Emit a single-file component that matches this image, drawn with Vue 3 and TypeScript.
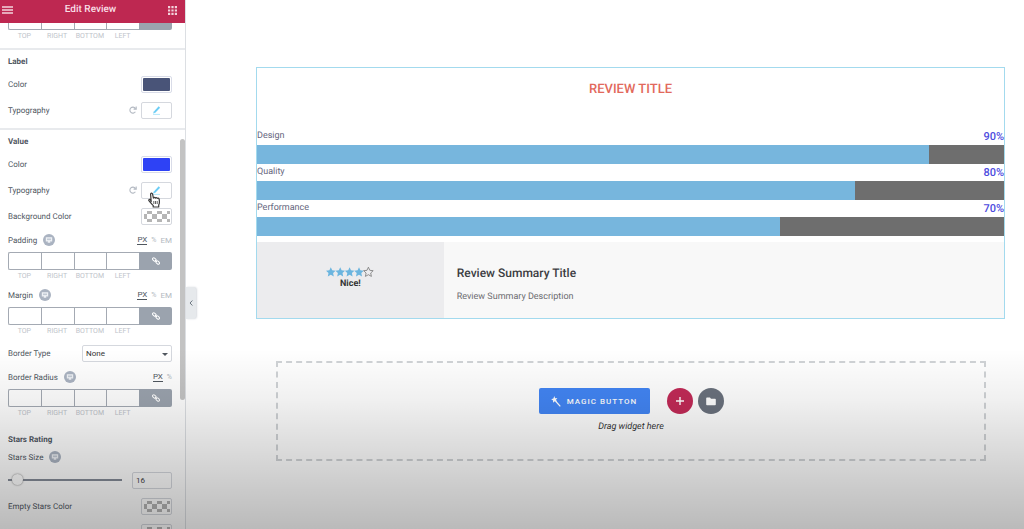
<script setup lang="ts">
import { ref } from 'vue'

interface Criterion {
  name: string
  value: number
}

const criteria: Criterion[] = [
  { name: 'Design', value: 90 },
  { name: 'Quality', value: 80 },
  { name: 'Performance', value: 70 },
]
const sides = ['Top', 'Right', 'Bottom', 'Left']
const spacingUnits = ['PX', '%', 'EM']
const spacing = ['Padding', 'Margin']
const starsSize = ref(16)
const labelColor = ref('#495478')
const valueColor = ref('#2e42f5')
</script>

<template>
  <div class="editor">
    <aside class="panel">
      <header class="panel-head">
        <button class="icon-btn" aria-label="Menu">
          <svg width="11" height="8" viewBox="0 0 11 8"><path d="M0 1h11M0 4h11M0 7h11" stroke="#f3d3dc" stroke-width="1.5" /></svg>
        </button>
        <h1>Edit Review</h1>
        <button class="icon-btn" aria-label="Widgets">
          <svg width="9" height="9" viewBox="0 0 9 9" fill="#f3d3dc">
            <path d="M0 0h2.200v2.200H0zM3.400 0h2.200v2.200H3.400zM6.800 0H9v2.200H6.800zM0 3.400h2.200v2.200H0zM3.400 3.400h2.200v2.200H3.400zM6.800 3.400H9v2.200H6.800zM0 6.800h2.200V9H0zM3.400 6.800h2.200V9H3.400zM6.800 6.800H9V9H6.800z" />
          </svg>
        </button>
      </header>

      <div class="scroll">
        <div class="controls">
          <section class="group first">
            <div class="dims">
              <label v-for="s in sides" :key="s"><input type="text" /><span>{{ s }}</span></label>
              <button class="link" aria-label="Link values"></button>
            </div>
          </section>

          <section class="group">
            <h2>Label</h2>
            <div class="row">
              <label for="label-color">Color</label>
              <input id="label-color" v-model="labelColor" class="swatch" type="color" />
            </div>
            <div class="row">
              <span>Typography</span>
              <button class="reset" aria-label="Reset label typography">
                <svg width="8" height="8" viewBox="0 0 8 8"><path d="M6.400 5.800A3 3 0 1 1 6.300 2.300M7.200.6v2.500H4.600" fill="none" stroke="#b3b9c2" stroke-width="1.100" /></svg>
              </button>
              <button class="box-btn" aria-label="Edit label typography">
                <svg width="9" height="9" viewBox="0 0 9 9"><path d="M2.600 6.200 7.400 1" stroke="#6bcdf5" stroke-width="1.900" /><path d="m1.200 7.400.6-2.200 1.600 1.500z" fill="#6bcdf5" /><path d="M1 8.400h7" stroke="#b5e8fa" stroke-width="1" /></svg>
              </button>
            </div>
          </section>

          <section class="group">
            <h2>Value</h2>
            <div class="row">
              <label for="value-color">Color</label>
              <input id="value-color" v-model="valueColor" class="swatch" type="color" />
            </div>
            <div class="row">
              <span>Typography</span>
              <button class="reset" aria-label="Reset value typography">
                <svg width="8" height="8" viewBox="0 0 8 8"><path d="M6.400 5.800A3 3 0 1 1 6.300 2.300M7.200.6v2.500H4.600" fill="none" stroke="#b3b9c2" stroke-width="1.100" /></svg>
              </button>
              <button class="box-btn" aria-label="Edit value typography">
                <svg width="9" height="9" viewBox="0 0 9 9"><path d="M2.600 6.200 7.400 1" stroke="#6bcdf5" stroke-width="1.900" /><path d="m1.200 7.400.6-2.200 1.600 1.500z" fill="#6bcdf5" /><path d="M1 8.400h7" stroke="#b5e8fa" stroke-width="1" /></svg>
                <svg class="cursor" width="13" height="16" viewBox="0 0 13 16">
                  <path d="M3.200 9.600 2.600 2.400C2.500.8 4.300.6 4.600 2.200l.8 3.900c.3-1 1.700-1 1.900.1.4-.8 1.700-.7 1.900.3.5-.7 1.800-.5 1.900.7.5 2.300.6 4.100-.4 5.800v2H5.200v-1.500C3.900 12.100 2.300 10.500.9 8.700c-.5-1 .8-1.700 1.500-.9z" fill="#fff" stroke="#3a3a3a" stroke-width="1.200" stroke-linejoin="round" />
                  <path d="M5.800 9v3M7.500 9v3M9.200 9v3" stroke="#3a3a3a" stroke-width=".8" />
                </svg>
              </button>
            </div>
            <div class="row">
              <span>Background Color</span>
              <button class="box-btn" aria-label="Background color"><i class="checker"></i></button>
            </div>

            <div class="spacing">
              <div v-for="name in spacing" :key="name" class="field">
                <div class="caption">
                  <span>{{ name }}</span>
                  <button class="device" aria-label="Desktop">
                    <svg width="12" height="12" viewBox="0 0 12 12"><circle cx="6" cy="6" r="6" fill="#aab3c1" /><path d="M2.800 3.200h6.400v4.400H7l.4 1.200H4.600L5 7.600H2.800z" fill="#eef1f5" /><path d="M4 4.500h4v1.600H4z" fill="#c3cad4" /></svg>
                  </button>
                  <span class="units"><button v-for="(u, i) in spacingUnits" :key="u" :class="{ on: i === 0, pct: u === '%' }">{{ u }}</button></span>
                </div>
                <div class="dims">
                  <label v-for="s in sides" :key="s"><input type="text" /><span>{{ s }}</span></label>
                  <button class="link" aria-label="Link values">
                    <svg width="8" height="8" viewBox="0 0 8 8" fill="none" stroke="#fff" stroke-width="1"><rect x=".3" y="1.300" width="4" height="2.400" rx="1.200" transform="rotate(45 2.300 2.500)" /><rect x="3.700" y="4.300" width="4" height="2.400" rx="1.200" transform="rotate(45 5.700 5.500)" /><path d="m3 3 2 2" /></svg>
                  </button>
                </div>
              </div>
            </div>

            <div class="row select-row">
              <label for="border-type">Border Type</label>
              <div class="select">
                <select id="border-type"><option>None</option></select>
              </div>
            </div>

            <div class="field">
              <div class="caption">
                <span>Border Radius</span>
                <button class="device" aria-label="Desktop">
                  <svg width="12" height="12" viewBox="0 0 12 12"><circle cx="6" cy="6" r="6" fill="#aab3c1" /><path d="M2.800 3.200h6.400v4.400H7l.4 1.200H4.600L5 7.600H2.800z" fill="#eef1f5" /><path d="M4 4.500h4v1.600H4z" fill="#c3cad4" /></svg>
                </button>
                <span class="units"><button class="on">PX</button><button class="pct">%</button></span>
              </div>
              <div class="dims">
                <label v-for="s in sides" :key="s"><input type="text" /><span>{{ s }}</span></label>
                <button class="link" aria-label="Link values">
                  <svg width="8" height="8" viewBox="0 0 8 8" fill="none" stroke="#fff" stroke-width="1"><rect x=".3" y="1.300" width="4" height="2.400" rx="1.200" transform="rotate(45 2.300 2.500)" /><rect x="3.700" y="4.300" width="4" height="2.400" rx="1.200" transform="rotate(45 5.700 5.500)" /><path d="m3 3 2 2" /></svg>
                </button>
              </div>
            </div>

            <h2 class="sub">Stars Rating</h2>
            <div class="caption">
              <label for="stars-size">Stars Size</label>
              <button class="device" aria-label="Desktop">
                <svg width="12" height="12" viewBox="0 0 12 12"><circle cx="6" cy="6" r="6" fill="#aab3c1" /><path d="M2.800 3.200h6.400v4.400H7l.4 1.200H4.600L5 7.600H2.800z" fill="#eef1f5" /><path d="M4 4.500h4v1.600H4z" fill="#c3cad4" /></svg>
              </button>
            </div>
            <div class="slider">
              <input id="stars-size" v-model.number="starsSize" type="range" min="12" max="120" />
              <input v-model.number="starsSize" class="num" type="text" aria-label="Stars size value" />
            </div>
            <div class="row">
              <span>Empty Stars Color</span>
              <button class="box-btn" aria-label="Empty stars color"><i class="checker"></i></button>
            </div>
            <div class="row">
              <span>Filled Stars Color</span>
              <button class="box-btn" aria-label="Filled stars color"><i class="checker"></i></button>
            </div>
          </section>
        </div>
      </div>
      <div class="thumb"></div>
      <button class="collapse" aria-label="Collapse panel">
        <svg width="4" height="6" viewBox="0 0 4 6"><path d="M3.400.5 1 3l2.400 2.500" fill="none" stroke="#6d7882" stroke-width="1" /></svg>
      </button>
    </aside>

    <main class="canvas">
      <article class="review">
        <h2 class="title">REVIEW TITLE</h2>
        <div v-for="c in criteria" :key="c.name" class="criterion">
          <div class="criterion-head">
            <span>{{ c.name }}</span>
            <strong>{{ c.value }}%</strong>
          </div>
          <div class="track"><div class="fill" :style="{ width: c.value + '%' }"></div></div>
        </div>
        <div class="summary">
          <div class="score">
            <svg width="48" height="10" viewBox="0 0 48 10" role="img" aria-label="4 of 5 stars">
              <path v-for="n in 5" :key="n" :transform="`translate(${(n - 1) * 9.4} 0)`" d="M4.800.2 6.200 3.300l3.400.4-2.500 2.300.7 3.400-3-1.700-3 1.700.7-3.400L0 3.700l3.400-.4z" :class="n < 5 ? 'star-on' : 'star-off'" />
            </svg>
            <b>Nice!</b>
          </div>
          <div class="summary-text">
            <h3>Review Summary Title</h3>
            <p>Review Summary Description</p>
          </div>
        </div>
      </article>

      <section class="drop">
        <div class="actions">
          <button class="magic">
            <svg width="10" height="11" viewBox="0 0 10 11"><path d="m4.500 5 4.800 5.400" stroke="#fff" stroke-width="1.200" /><path d="m3.300 0 .8 2.200L6.400 2 5 3.800l1 2-2.200-.6L2 6.700l.1-2.300L.2 3.200l2.200-.6z" fill="#fff" /></svg>
            MAGIC BUTTON
          </button>
          <button class="round add" aria-label="Add section">
            <svg width="8" height="8" viewBox="0 0 8 8"><path d="M4 0v8M0 4h8" stroke="#fff" stroke-width="1.400" /></svg>
          </button>
          <button class="round folder" aria-label="Add template">
            <svg width="10" height="9" viewBox="0 0 10 9"><path d="M1 .5h3l1 1.200h4a.8.8 0 0 1 .8.800v5a.8.8 0 0 1-.8.800H1a.8.8 0 0 1-.8-.8V1.300A.8.8 0 0 1 1 .5z" fill="#fff" /></svg>
          </button>
        </div>
        <p>Drag widget here</p>
      </section>
    </main>
    <div class="shade"></div>
  </div>
</template>

<style>
body { margin: 0; }
</style>

<style scoped>
* { box-sizing: border-box; }
h1, h2, h3, p { margin: 0; }
button { padding: 0; border: 0; background: none; font: inherit; color: inherit; display: flex; align-items: center; justify-content: center; }
svg { display: block; flex: none; }
.editor {
  position: relative;
  display: flex;
  height: 100vh;
  overflow: hidden;
  background: #fff;
  font-family: Roboto, "Liberation Sans", sans-serif;
  text-rendering: geometricPrecision;
}
.panel {
  position: relative;
  display: flex;
  flex-direction: column;
  flex: none;
  width: 186px;
  border-right: 1px solid #dcdfe3;
  font-size: 8px;
  color: #50575f;
}
.panel-head {
  display: flex;
  flex: none;
  align-items: center;
  justify-content: space-between;
  height: 23px;
  padding: 0 8px 3px 2px;
  background: #be2851;
}
.panel-head h1 { font-size: 10px; font-weight: 500; line-height: 16px; color: #f9dfe6; }
.scroll { flex: 1; min-height: 0; overflow: hidden; }
.controls { margin-top: -13px; }
.group { padding: 6px 13px 5px 8px; border-top: 2px solid #e8eaed; }
.group.first { padding-top: 0; padding-bottom: 6px; border-top: 0; }
h2 { font-size: 8px; font-weight: 700; line-height: 12px; }
.row { display: flex; align-items: center; height: 26px; }
h2 + .row { margin-top: 3px; }
.row > :first-child { margin-right: auto; }
.swatch {
  width: 31px;
  height: 17px;
  padding: 1px;
  border: 1px solid #d9dce8;
  border-radius: 2px;
  background: #fff;
}
.swatch::-webkit-color-swatch-wrapper { padding: 0; }
.swatch::-webkit-color-swatch { border: 0; border-radius: 1px; }
.reset { margin-right: 4px; }
.box-btn {
  position: relative;
  width: 31px;
  height: 17px;
  border: 1px solid #d5d8de;
  border-radius: 2px;
  background: #fff;
}
.cursor { position: absolute; left: 6px; top: 9px; z-index: 2; }
.checker {
  width: 26px;
  height: 11px;
  background: repeating-conic-gradient(#b5b5b5 0 25%, #fff 0 50%) 3px 3px / 10px 10px;
}
.spacing { margin-top: 1px; }
.select-row { height: 27px; }
.field { height: 55px; }
.caption { display: flex; align-items: center; height: 20px; }
.device { margin-left: 6px; }
.units { display: flex; gap: 4px; margin-left: auto; color: #b3b9c1; }
.units button { line-height: 9px; }
.units .pct { font-size: 7px; }
.units .on { color: #50575f; border-bottom: 1px solid #50575f; }
.dims { display: flex; align-items: flex-start; margin-top: 2px; }
.dims label { flex: 1; text-align: center; font-size: 7px; line-height: 12px; color: #c0c4ca; text-transform: uppercase; }
.dims label span { display: block; }
.dims input {
  display: block;
  width: 100%;
  height: 18px;
  border: 1px solid #a4aab3;
  border-right-width: 0;
  background: #fff;
}
.dims label:first-child input { border-radius: 2px 0 0 2px; }
.link { width: 33px; height: 18px; background: #9ba3ae; border-radius: 0 2px 2px 0; }
.select { position: relative; width: 90px; }
.select::after {
  content: "";
  position: absolute;
  right: 4px;
  top: 8px;
  border: 3px solid transparent;
  border-top-color: #50575f;
  border-bottom: 0;
}
select {
  appearance: none;
  display: block;
  width: 100%;
  height: 17px;
  padding: 0 3px;
  border: 1px solid #d5d8de;
  border-radius: 2px;
  background: #fff;
  font: inherit;
  color: #333;
}
.sub { margin: 12px 0 1px; }
.slider { display: flex; align-items: center; gap: 10px; height: 26px; }
.slider input[type="range"] { appearance: none; flex: 1; min-width: 0; height: 12px; margin: 0; background: none; }
.slider input::-webkit-slider-runnable-track { height: 2px; background: #858c98; }
.slider input::-webkit-slider-thumb {
  appearance: none;
  width: 11px;
  height: 11px;
  margin-top: -5px;
  border-radius: 50%;
  background: #fff;
  box-shadow: 0 0 2px #777;
}
.num { width: 40px; height: 17px; padding: 0 3px; border: 1px solid #d5d8de; border-radius: 2px; background: #fff; font: inherit; color: #444; }
.thumb { position: absolute; right: 0; top: 139px; width: 5px; height: 261px; border-radius: 3px; background: #c3c3c3; }
.collapse {
  position: absolute;
  left: 186px;
  top: 287px;
  width: 10px;
  height: 32px;
  border-radius: 0 3px 3px 0;
  background: #e6e9ec;
  box-shadow: 1px 0 2px #d8dbe0;
}
.canvas { flex: 1; min-width: 0; padding: 67px 19px 0 70px; }
.review { border: 1px solid #a3daee; }
.title { padding: 12px 0; font-size: 13px; font-weight: 500; line-height: 20px; text-align: center; color: #e2695c; margin-bottom: 16px; }
.criterion-head { display: flex; align-items: center; justify-content: space-between; height: 17px; font-size: 9px; line-height: 15px; color: #66667d; }
.criterion-head strong { font-size: 11px; font-weight: 500; color: #4c4ade; }
.track { height: 19px; background: #6e6e6e; }
.fill { height: 100%; background: #77b6dd; }
.summary { display: flex; margin-top: 6px; height: 76px; background: #f8f8f8; }
.score { display: flex; flex-direction: column; align-items: center; width: 25%; padding-top: 25px; background: #ececee; font-size: 9px; line-height: 14px; color: #333; }
.star-on { fill: #6bb5df; }
.star-off { fill: none; stroke: #777; stroke-width: .8; }
.summary-text { padding: 22px 13px; color: #3c3d42; }
.summary-text h3 { font-size: 12px; font-weight: 500; line-height: 18px; }
.summary-text p { margin-top: 8px; font-size: 9px; line-height: 14px; color: #6c6c70; }
.drop {
  display: flex;
  flex-direction: column;
  align-items: center;
  height: 100px;
  margin: 42px 19px 0 20px;
  padding-top: 25px;
  border: 2px dashed #d0d3d6;
}
.actions { display: flex; align-items: center; }
.magic {
  gap: 6px;
  width: 111px;
  height: 26px;
  border-radius: 2px;
  background: #4285f4;
  font-size: 8px;
  font-weight: 500;
  letter-spacing: 1px;
  color: #fff;
}
.round { width: 26px; height: 26px; border-radius: 50%; }
.add { margin-left: 17px; background: #c22a57; }
.folder { margin-left: 5px; background: #6a717d; }
.drop p { margin-top: 6px; font-size: 9px; font-style: italic; line-height: 14px; color: #333; }
.shade {
  position: absolute;
  inset: 66% 0 0;
  background: linear-gradient(rgba(0, 0, 0, 0), rgba(0, 0, 0, .06) 28%, rgba(0, 0, 0, .17) 65%, rgba(0, 0, 0, .27));
  pointer-events: none;
}
</style>
